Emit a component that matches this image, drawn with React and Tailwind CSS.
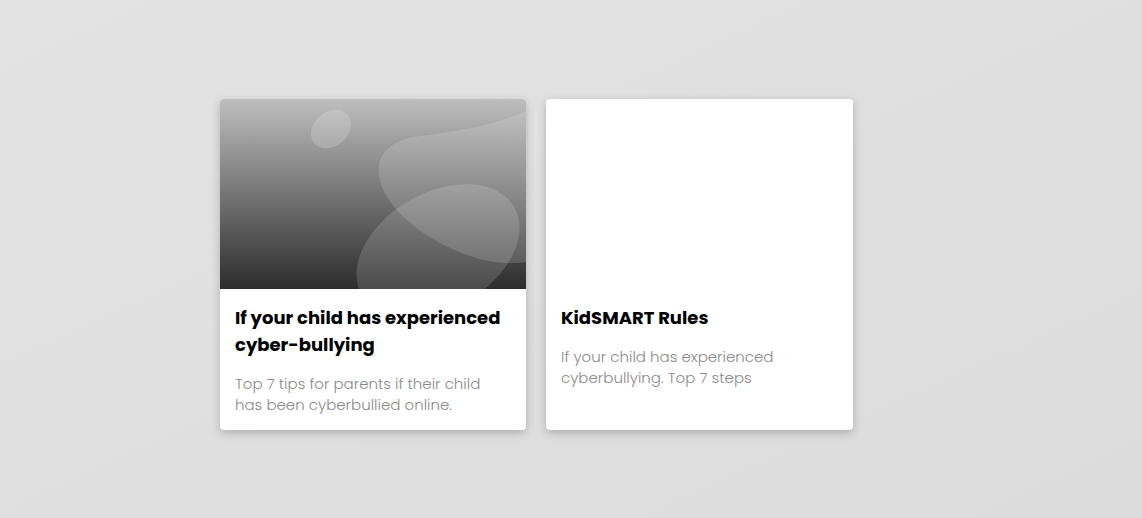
import React from "react";

function Blobs() {
  return (
    <svg className="absolute inset-0 h-full w-full" viewBox="0 0 306 190" preserveAspectRatio="none">
      <defs>
        <linearGradient id="g" x1="0" y1="0" x2="0" y2="1">
          <stop offset="0" stopColor="#bebebe" />
          <stop offset="1" stopColor="#2c2c2c" />
        </linearGradient>
      </defs>
      <rect width="306" height="190" fill="url(#g)" />
      <ellipse cx="111" cy="30" rx="22" ry="17" transform="rotate(-40 111 30)" fill="white" fillOpacity="0.18" />
      <path d="M306 12 C 275 26, 240 32, 200 37 C 168 41, 154 58, 160 82 C 170 118, 222 152, 268 162 C 290 166, 306 163, 306 163 Z" fill="white" fillOpacity="0.15" />
      <ellipse cx="218" cy="152" rx="88" ry="58" transform="rotate(-30 218 152)" fill="white" fillOpacity="0.15" />
    </svg>
  );
}

function Card({ image, title, desc, wide }) {
  return (
    <div className={"flex flex-col overflow-hidden rounded-[4px] bg-white shadow-[0_3px_10px_rgba(0,0,0,0.22)] " + (wide ? "w-[307px]" : "w-[306px]")}>
      <div className="relative h-[190px] w-full shrink-0">{image && <Blobs />}</div>
      <div className="px-[15px] pt-[15px] pb-[15px]">
        <h3 className="text-[18px] font-bold leading-[27px] text-black" style={{ fontFamily: "'Poppins', 'Open Sans', sans-serif" }}>{title}</h3>
        <p className="mt-[15px] text-[15px] font-light leading-[21px] text-[#8a8a8a]" style={{ fontFamily: "'Poppins', 'Open Sans', sans-serif" }}>{desc}</p>
      </div>
    </div>
  );
}

export default function App() {
  return (
    <div className="h-[518px] w-full bg-gradient-to-br from-[#e3e3e3] to-[#dcdcdc] pl-[220px] pt-[99px]">
      <div className="flex items-stretch gap-[20px]">
        <Card image title="If your child has experienced cyber-bullying" desc="Top 7 tips for parents if their child has been cyberbullied online." />
        <Card wide title="KidSMART Rules" desc="If your child has experienced cyberbullying. Top 7 steps" />
      </div>
    </div>
  );
}
